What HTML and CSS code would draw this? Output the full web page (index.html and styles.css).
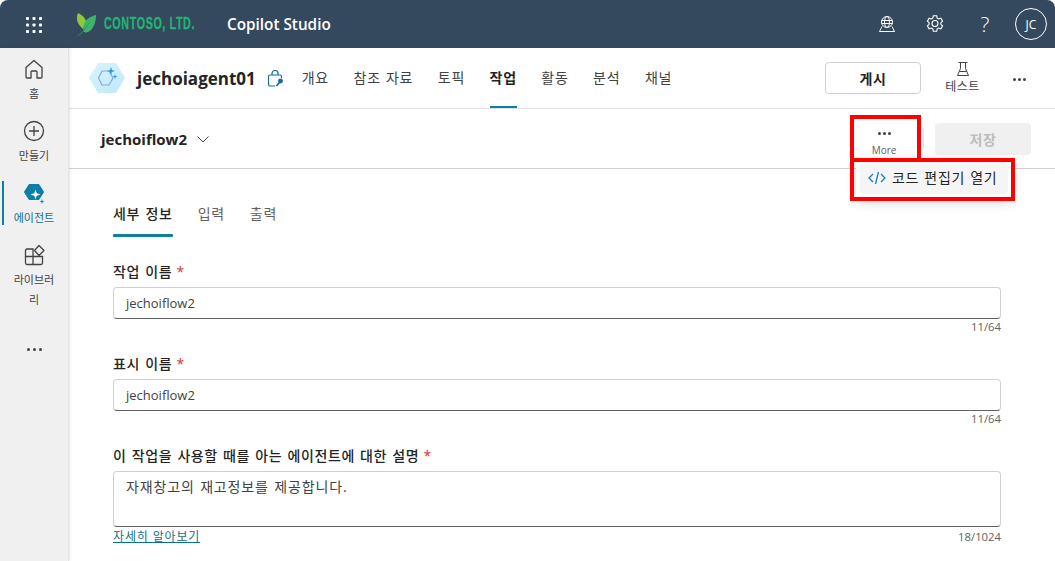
FILE: index.html
```html
<!DOCTYPE html>
<html lang="ko">
<head>
<meta charset="utf-8">
<title>Copilot Studio</title>
<link rel="stylesheet" href="styles.css">
</head>
<body>
<div class="app">
  <header class="topbar">
    <div class="waffle">
      <svg width="18" height="18" viewBox="0 0 18 18" fill="#fff"><rect x="1" y="1" width="3" height="3" rx=".8"/><rect x="7.500" y="1" width="3" height="3" rx=".8"/><rect x="14" y="1" width="3" height="3" rx=".8"/><rect x="1" y="7.500" width="3" height="3" rx=".8"/><rect x="7.500" y="7.500" width="3" height="3" rx=".8"/><rect x="14" y="7.500" width="3" height="3" rx=".8"/><rect x="1" y="14" width="3" height="3" rx=".8"/><rect x="7.500" y="14" width="3" height="3" rx=".8"/><rect x="14" y="14" width="3" height="3" rx=".8"/></svg>
    </div>
    <div class="brand">
      <svg class="leaf" width="22" height="26" viewBox="0 0 22 26"><path d="M3 2c-1.500 3-1.500 7 0 10 1 2 3 4 5 6 .5-3 2-5 3-7C11 7 7 4 3 2z" fill="#8dc63f"/><path d="M21 4c-5 1-10 4-12 9-1 3-1 6 0 8 1 .5 3 .5 4 0 5-2 8-9 8-17z" fill="#3cb56b"/><path d="M1 25.500c3-1.500 6-4 8-7 2-3 4-6 7-9-2 3-4 6-6 9-2 3-5 6-9 7z" fill="#2a9d5c"/></svg>
      <span class="contoso">CONTOSO, LTD.</span>
    </div>
    <div class="product">Copilot Studio</div>
    <div class="top-actions">
      <svg class="ta-globe" width="18" height="18" viewBox="0 0 18 18" fill="none" stroke="#fff" stroke-width="1"><circle cx="9" cy="7" r="5.500"/><ellipse cx="9" cy="7" rx="2.500" ry="5.500"/><path d="M3.500 5.500h11M3.500 8.500h11M4 11.500L1.500 16.500h15L14 11.500"/></svg>
      <svg class="ta-gear" width="20" height="20" viewBox="0 0 20 20" fill="none" stroke="#fff" stroke-width="1.100"><path d="M8.300 1.800h3.400l.5 2.300 1.500.9 2.200-.8 1.700 2.900-1.700 1.600v1.600l1.700 1.600-1.700 2.900-2.200-.8-1.500.9-.5 2.300H8.300l-.5-2.300-1.500-.9-2.200.8-1.700-2.900 1.700-1.600V8.700L2.400 7.100l1.700-2.900 2.200.8 1.500-.9z"/><circle cx="10" cy="9.500" r="3"/></svg>
      <span class="ta-help">?</span>
      <span class="avatar">JC</span>
    </div>
  </header>

  <div class="main">
    <nav class="sidenav">
      <div class="nav-item">
        <svg width="22" height="22" viewBox="0 0 22 22" fill="none" stroke="#424242" stroke-width="1.300"><path d="M3 9.500L11 2.500l8 7V19a1 1 0 0 1-1 1h-4v-6a1 1 0 0 0-1-1H9a1 1 0 0 0-1 1v6H4a1 1 0 0 1-1-1z" stroke-linejoin="round"/></svg>
        <span class="nav-label">홈</span>
      </div>
      <div class="nav-item">
        <svg width="22" height="22" viewBox="0 0 22 22" fill="none" stroke="#424242" stroke-width="1.300"><circle cx="11" cy="11" r="9.500"/><path d="M11 6v10M6 11h10"/></svg>
        <span class="nav-label">만들기</span>
      </div>
      <div class="nav-item active">
        <svg width="22" height="22" viewBox="0 0 22 22"><path d="M6.500 3h9L20 10l-4.500 7h-9L2 10z" fill="#0f7ea6" stroke="#0f7ea6" stroke-width="2" stroke-linejoin="round"/><path d="M12.500 7.500l1.200 3.800 3.800 1.200-3.800 1.200-1.200 3.800-1.200-3.800-3.800-1.200 3.800-1.200z" fill="#fff"/><path d="M19 16.500l.8 2.200 2.200.8-2.200.8-.8 2.200-.8-2.200-2.200-.8 2.200-.8z" fill="#0f7ea6" stroke="#f0f0f0" stroke-width=".5"/></svg>
        <span class="nav-label">에이전트</span>
      </div>
      <div class="nav-item">
        <svg width="22" height="22" viewBox="0 0 22 22" fill="none" stroke="#424242" stroke-width="1.300"><path d="M10 5H4a1.500 1.500 0 0 0-1.500 1.500V19A1.500 1.500 0 0 0 4 20.500h14a1.500 1.500 0 0 0 1.500-1.500v-6.500H10zM10 12.500V20.500M2.500 12.500H10"/><path d="M16 1.500l5 5-5 5-4.500-5z" stroke-linejoin="round"/></svg>
        <span class="nav-label">라이브러리</span>
      </div>
      <div class="nav-more"><i></i><i></i><i></i></div>
    </nav>

    <div class="content">
      <div class="agentbar">
        <svg class="agent-logo" width="36" height="32" viewBox="0 0 36 32"><defs><linearGradient id="hex" x1="0" y1="0" x2="1" y2="1"><stop offset="0" stop-color="#d9f3fd"/><stop offset="1" stop-color="#bfe9fb"/></linearGradient></defs><path d="M9 1h18l9 15-9 15H9L0 16z" fill="url(#hex)"/><path d="M13 9h7l4 7-4 7h-7l-3.500-7z" fill="none" stroke="#7fa9e8" stroke-width="1.200"/><path d="M22 5l1 3 3 1-3 1-1 3-1-3-3-1 3-1z" fill="#2a9fdc"/><path d="M26 12l.6 2 2 .6-2 .6-.6 2-.6-2-2-.6 2-.6z" fill="#2a9fdc"/></svg>
        <div class="agent-name">jechoiagent01</div>
        <svg class="agent-lock" width="18" height="18" viewBox="0 0 18 18" fill="none" stroke="#0f6f96" stroke-width="1.200"><path d="M5 5V3.500a3 3 0 0 1 6 0V5"/><path d="M8 16H3a1.500 1.500 0 0 1-1.500-1.500v-8A1.500 1.500 0 0 1 3 5h10a1.500 1.500 0 0 1 1.500 1.500V8"/><circle cx="13.500" cy="11" r="1.800" fill="#0f6f96"/><path d="M12.500 12.500L9.500 16" stroke-width="1.800"/></svg>
        <ul class="agent-tabs">
          <li>개요</li>
          <li>참조 자료</li>
          <li>토픽</li>
          <li class="current">작업</li>
          <li>활동</li>
          <li>분석</li>
          <li>채널</li>
        </ul>
        <div class="agent-actions">
          <button class="publish">게시</button>
          <div class="test">
            <svg width="16" height="16" viewBox="0 0 16 16" fill="none" stroke="#424242" stroke-width="1"><path d="M3.500 1.500h9M5.500 1.500v6L2.500 14.500h11L10.500 7.500v-6M4.500 10.500h7"/></svg>
            <span>테스트</span>
          </div>
          <div class="ellipsis"><i></i><i></i><i></i></div>
        </div>
      </div>

      <div class="flowbar">
        <div class="flow-name">jechoiflow2</div>
        <svg class="flow-chevron" width="14" height="14" viewBox="0 0 14 14" fill="none" stroke="#424242" stroke-width="1"><path d="M1.500 4.500L7 10l5.500-5.500"/></svg>
        <div class="flow-actions">
          <div class="more">
            <div class="ellipsis"><i></i><i></i><i></i></div>
            <span>More</span>
          </div>
          <span class="divider"></span>
          <button class="save">저장</button>
        </div>
      </div>

      <div class="form">
        <ul class="form-tabs">
          <li class="current">세부 정보</li>
          <li>입력</li>
          <li>출력</li>
        </ul>
        <div class="field">
          <label>작업 이름 <em>*</em></label>
          <div class="input">jechoiflow2</div>
          <div class="meta"><span class="count">11/64</span></div>
        </div>
        <div class="field">
          <label>표시 이름 <em>*</em></label>
          <div class="input">jechoiflow2</div>
          <div class="meta"><span class="count">11/64</span></div>
        </div>
        <div class="field">
          <label>이 작업을 사용할 때를 아는 에이전트에 대한 설명 <em>*</em></label>
          <div class="input textarea">자재창고의 재고정보를 제공합니다.</div>
          <div class="meta"><a class="learn">자세히 알아보기</a><span class="count">18/1024</span></div>
        </div>
      </div>
    </div>
  </div>

  <div class="menu">
    <div class="menu-item">
      <svg width="18" height="14" viewBox="0 0 18 14" fill="none" stroke="#1b7bc4" stroke-width="1.300"><path d="M5 3L1 7l4 4M13 3l4 4-4 4M10.500 1L7.500 13"/></svg>
      <span>코드 편집기 열기</span>
    </div>
  </div>
  <div class="mark mark-more"></div>
  <div class="mark mark-code"></div>
</div>
</body>
</html>
```
FILE: styles.css
```css
* { box-sizing: border-box; }
html, body { margin: 0; height: 100%; background: #fff; overflow: hidden; }
body { font-family: "Open Sans", "Noto Sans CJK KR", sans-serif; color: #242424; }
ul { list-style: none; margin: 0; padding: 0; }
button { font-family: inherit; }
em { font-style: normal; color: #d13438; margin-left: -1px; }

.app { position: relative; width: 1055px; height: 561px; overflow: hidden; display: flex; flex-direction: column; background: #fff; }

.topbar { height: 48px; flex: none; display: flex; align-items: center; background: #35495e; color: #fff; border-radius: 8px 8px 0 0; }
.waffle { width: 68px; display: flex; justify-content: center; padding-top: 1px; }
.brand { display: flex; align-items: center; gap: 7px; width: 150px; margin-left: 7px; }
.contoso { font-family: "Liberation Sans", sans-serif; font-weight: 700; font-size: 17px; color: #22b573; display: inline-block; transform: scaleX(.63); transform-origin: left center; letter-spacing: 1px; white-space: nowrap; -webkit-text-stroke: .3px #22b573; }
.leaf { flex: none; }
.product { font-size: 15.300px; font-weight: 600; margin-left: 2px; }
.top-actions { margin-left: auto; display: flex; align-items: center; padding-right: 8px; }
.ta-globe { margin-right: 29px; }
.ta-gear { margin-right: 32px; }
.ta-help { font-size: 21px; font-weight: 300; width: 16px; margin-right: 22px; text-align: center; line-height: 24px; }
.avatar { width: 32px; height: 32px; border: 1px solid #fff; border-radius: 50%; display: flex; align-items: center; justify-content: center; font-size: 12px; }

.main { flex: 1; display: flex; min-height: 0; }
.sidenav { width: 69px; flex: none; background: #f0f0f0; border-right: 1px solid #e4e4e4; box-shadow: 1px 0 3px rgba(0,0,0,.1); display: flex; flex-direction: column; align-items: center; padding-top: 10px; position: relative; z-index: 1; }
.nav-item { width: 100%; display: flex; flex-direction: column; align-items: center; position: relative; color: #424242; margin-bottom: 16px; }
.nav-item svg { flex: none; }
.nav-label { font-size: 11px; line-height: 20px; margin-top: 4px; width: 44px; text-align: center; word-break: break-all; color: #424242; }
.nav-item.active .nav-label { color: #0f6f96; }
.nav-item.active::before { content: ""; position: absolute; left: 2px; top: -1px; bottom: 3px; width: 2px; background: #0f7ea6; }
.nav-more { display: flex; gap: 3px; margin-top: 22px; }
.nav-more i, .ellipsis i { display: block; width: 3px; height: 3px; border-radius: 50%; background: #424242; }
.ellipsis { display: flex; gap: 2px; }

.content { flex: 1; min-width: 0; display: flex; flex-direction: column; }

.agentbar { height: 61px; flex: none; display: flex; align-items: center; padding-left: 20px; border-bottom: 1px solid #e0e0e0; }
.agent-logo { flex: none; margin-right: 12px; }
.agent-name { font-size: 17px; font-weight: 700; color: #242424; }
.agent-lock { margin-left: 11px; margin-top: 2px; flex: none; }
.agent-tabs { display: flex; gap: 24.600px; margin-left: 17px; height: 100%; }
.agent-tabs li { font-size: 14px; letter-spacing: .7px; word-spacing: 1px; color: #424242; line-height: 60px; height: 100%; white-space: nowrap; position: relative; }
.agent-tabs li.current { font-weight: 700; color: #242424; }
.agent-tabs li.current::after { content: ""; position: absolute; left: 0; right: 0; bottom: 0; height: 2px; background: #0f7ea6; }
.agent-actions { margin-left: auto; display: flex; align-items: center; padding-right: 29px; }
.agent-actions .ellipsis { padding-top: 2px; }
.publish { width: 96px; height: 32px; background: #fff; border: 1px solid #d1d1d1; border-radius: 4px; font-size: 14px; letter-spacing: .6px; font-weight: 700; color: #242424; padding: 0; }
.test { width: 83px; margin-right: 9px; display: flex; flex-direction: column; align-items: center; font-size: 12px; letter-spacing: .4px; color: #424242; }
.test span { line-height: 18px; margin-top: 1px; }

.flowbar { height: 60px; flex: none; display: flex; align-items: center; padding-left: 32px; border-bottom: 1px solid #d1d1d1; }
.flow-name { font-size: 15px; font-weight: 700; }
.flow-chevron { margin-left: 9px; }
.flow-actions { margin-left: auto; display: flex; align-items: center; padding-right: 24px; }
.more { width: 60px; display: flex; flex-direction: column; align-items: center; font-size: 10px; color: #616161; margin-right: 11px; padding-top: 12px; }
.more span { line-height: 14px; margin-top: 8px; }
.divider { width: 1px; height: 20px; background: #e0e0e0; margin-right: 11px; margin-left: -2px; }
.save { width: 96px; height: 32px; border: 0; border-radius: 4px; background: #f0f0f0; color: #bdbdbd; font-size: 14px; letter-spacing: .6px; font-weight: 700; padding: 0; }

.form { flex: 1; padding: 32px 54px 0 44px; min-height: 0; }
.form-tabs { display: flex; gap: 25px; height: 36px; margin-bottom: 25px; }
.form-tabs li { font-size: 14px; letter-spacing: .7px; word-spacing: 1px; color: #616161; line-height: 26px; position: relative; white-space: nowrap; }
.form-tabs li.current { color: #242424; font-weight: 500; }
.form-tabs li.current::after { content: ""; position: absolute; left: 0; right: 0; bottom: 0; height: 3px; background: #0f7ea6; border-radius: 1px; }

.field { margin-bottom: 19px; }
.field label { display: block; font-size: 14px; letter-spacing: .6px; word-spacing: 1px; font-weight: 500; line-height: 20px; color: #242424; margin-bottom: 5px; }
.input { height: 32px; border: 1px solid #d1d1d1; border-bottom-color: #616161; border-radius: 4px; padding: 0 12px; font-size: 13px; line-height: 30px; color: #424242; }
.textarea { height: 56px; font-size: 14px; letter-spacing: .85px; word-spacing: 1px; margin-bottom: 2px; }
.meta { display: flex; justify-content: space-between; height: 16px; line-height: 16px; }
.count { margin-left: auto; color: #616161; font-size: 11.300px; }
.learn { color: #0f6f86; text-decoration: underline; font-size: 12px; letter-spacing: .85px; }

.menu { position: absolute; left: 856px; top: 158px; width: 156px; height: 40px; padding: 4px; background: #fff; border-radius: 4px; box-shadow: 0 4px 12px rgba(0,0,0,.18); }
.menu-item { height: 32px; background: #f5f5f5; border-radius: 4px; display: flex; align-items: center; gap: 6px; padding-left: 8px; font-size: 14px; letter-spacing: .65px; word-spacing: 1px; color: #242424; white-space: nowrap; }
.menu-item span { margin-top: -2px; }
.mark { position: absolute; border: 4px solid #f00; pointer-events: none; }
.mark-more { left: 850px; top: 115px; width: 71px; height: 47px; }
.mark-code { left: 850px; top: 158px; width: 165px; height: 43px; }
```
